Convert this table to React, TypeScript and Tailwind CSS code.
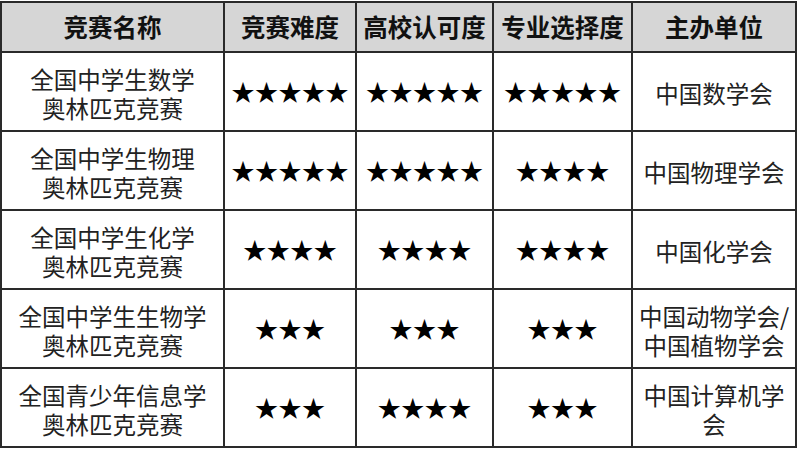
const rows = [
  { name: ["全国中学生数学", "奥林匹克竞赛"], a: 5, b: 5, c: 5, org: ["中国数学会"] },
  { name: ["全国中学生物理", "奥林匹克竞赛"], a: 5, b: 5, c: 4, org: ["中国物理学会"] },
  { name: ["全国中学生化学", "奥林匹克竞赛"], a: 4, b: 4, c: 4, org: ["中国化学会"] },
  { name: ["全国中学生生物学", "奥林匹克竞赛"], a: 3, b: 3, c: 3, org: ["中国动物学会/", "中国植物学会"] },
  { name: ["全国青少年信息学", "奥林匹克竞赛"], a: 3, b: 4, c: 3, org: ["中国计算机学", "会"] },
];

const headers = ["竞赛名称", "竞赛难度", "高校认可度", "专业选择度", "主办单位"];
const widths = ["w-[223px]", "w-[132px]", "w-[137px]", "w-[139px]", "w-[164px]"];

function Stars({ n }: { n: number }) {
  return <span className="text-[23.5px] text-black">{"★".repeat(n)}</span>;
}

export default function App() {
  return (
    <div className="h-[450px] w-[799px] bg-white pt-px" style={{ fontFamily: '"Noto Sans CJK SC", sans-serif' }}>
      <table className="table-fixed border-collapse">
        <thead>
          <tr className="h-[50px] bg-[#d6d6d6]">
            {headers.map((h, i) => (
              <th key={h} className={`${widths[i]} border-2 border-[#2a2a2a] p-0 text-center text-[24.5px] font-bold leading-none text-[#111]`}>
                {h}
              </th>
            ))}
          </tr>
        </thead>
        <tbody>
          {rows.map((r) => (
            <tr key={r.name[0]} className="h-[79px]">
              <td className="border-2 border-[#2a2a2a] p-0 pt-1 text-center text-[23.5px] leading-[29px] text-[#222]">
                {r.name.map((l) => (
                  <div key={l}>{l}</div>
                ))}
              </td>
              <td className="border-2 border-[#2a2a2a] p-0 text-center">
                <Stars n={r.a} />
              </td>
              <td className="border-2 border-[#2a2a2a] p-0 text-center">
                <Stars n={r.b} />
              </td>
              <td className="border-2 border-[#2a2a2a] p-0 text-center">
                <Stars n={r.c} />
              </td>
              <td className="border-2 border-[#2a2a2a] p-0 pt-1 text-center text-[23.5px] leading-[29px] text-[#222]">
                {r.org.map((l) => (
                  <div key={l}>{l}</div>
                ))}
              </td>
            </tr>
          ))}
        </tbody>
      </table>
    </div>
  );
}
